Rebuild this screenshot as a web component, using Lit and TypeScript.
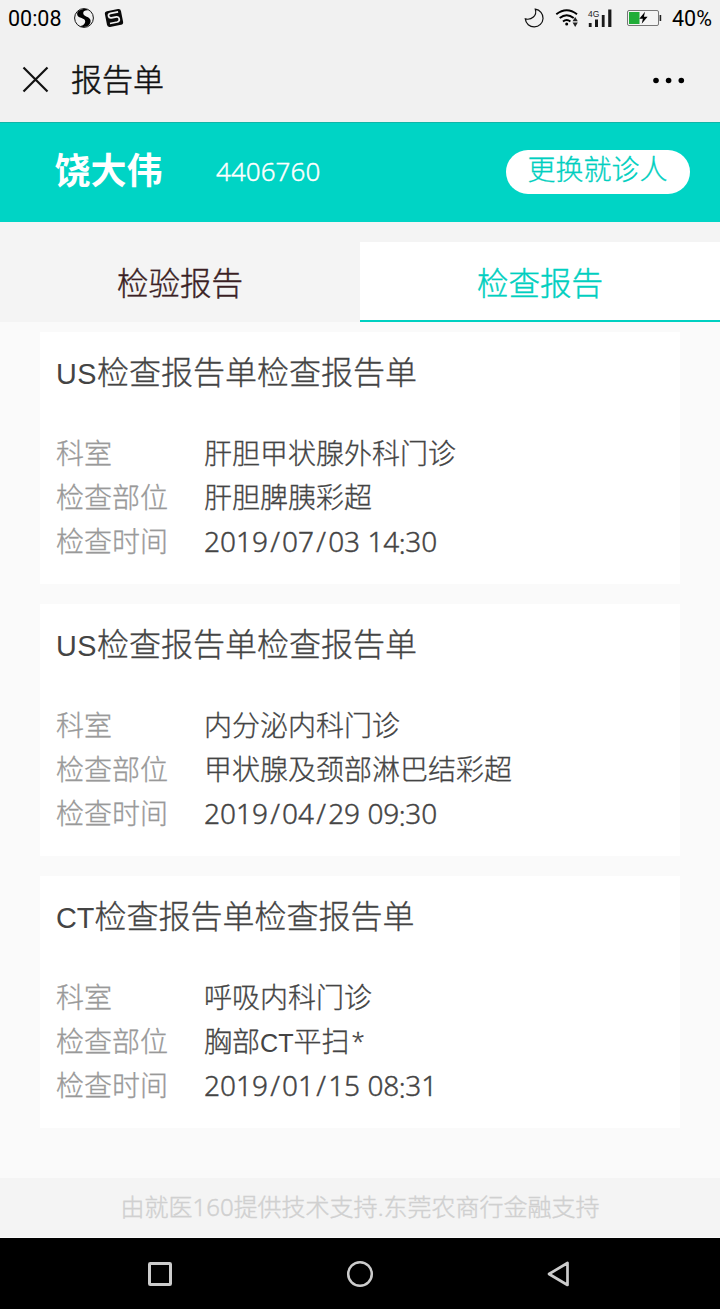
import { LitElement, html, css, svg } from "lit";
import { customElement, property, state } from "lit/decorators.js";
import { classMap } from "lit/directives/class-map.js";

interface Report {
  title: string;
  dept: string;
  part: string;
  time: string;
}

const REPORTS: Report[] = [
  { title: "US检查报告单检查报告单", dept: "肝胆甲状腺外科门诊", part: "肝胆脾胰彩超", time: "2019/07/03 14:30" },
  { title: "US检查报告单检查报告单", dept: "内分泌内科门诊", part: "甲状腺及颈部淋巴结彩超", time: "2019/04/29 09:30" },
  { title: "CT检查报告单检查报告单", dept: "呼吸内科门诊", part: "胸部CT平扫*", time: "2019/01/15 08:31" },
];

/* Wraps latin runs so that they can take their own face and size. */
const mixed = (text: string) =>
  text
    .split(/([A-Z]+|\*)/)
    .filter((p) => p)
    .map((p) =>
      /^[A-Z]+$/.test(p)
        ? html`<span class=${classMap({ latin: true, wide: p === "US" })}>${p}</span>`
        : p === "*"
          ? html`<span class="star">*</span>`
          : p
    );

const dateText = (text: string) =>
  text
    .split(/([/:])/)
    .map((p) => (p === "/" ? html`<span class="slash">/</span>` : p === ":" ? html`<span class="colon">:</span>` : p));

@customElement("report-card")
export class ReportCard extends LitElement {
  @property({ attribute: false }) report!: Report;

  static styles = css`
    :host {
      display: block;
      box-sizing: border-box;
      height: 252px;
      padding: 16px 16px 22px;
      background: #fff;
      color: #444;
      font-family: "Noto Sans CJK SC", sans-serif;
      -webkit-text-stroke: 0.3px currentColor;
    }
    .title {
      height: 44px;
      line-height: 44px;
      font-size: 32px;
      font-weight: 300;
      margin-bottom: 38px;
      white-space: nowrap;
    }
    .row {
      display: grid;
      grid-template-columns: 148px 1fr;
      height: 44px;
      line-height: 44px;
      font-size: 28px;
      font-weight: 300;
      white-space: nowrap;
    }
    .label {
      color: #999;
    }
    .latin {
      font-family: "Liberation Sans", sans-serif;
      font-size: 0.9em;
      line-height: 1;
      -webkit-text-stroke: 0;
    }
    .wide {
      letter-spacing: 0.5px;
    }
    .star {
      font-family: "Noto Sans", sans-serif;
      font-size: 0.85em;
      line-height: 1;
      margin-left: 2px;
      position: relative;
      top: -2px;
    }
    .date {
      font-family: "Noto Sans", sans-serif;
      line-height: 46px;
      -webkit-text-stroke: 0.4px currentColor;
    }
    .slash {
      padding: 0 2.200px;
    }
    .colon {
      margin: 0 -0.5px;
      position: relative;
      top: 2px;
    }
  `;

  render() {
    const r = this.report;
    return html`
      <div class="title">${mixed(r.title)}</div>
      <div class="row"><span class="label">科室</span><span>${mixed(r.dept)}</span></div>
      <div class="row"><span class="label">检查部位</span><span>${mixed(r.part)}</span></div>
      <div class="row"><span class="label">检查时间</span><span class="date">${dateText(r.time)}</span></div>
    `;
  }
}

@customElement("status-bar")
export class StatusBar extends LitElement {
  static styles = css`
    :host {
      display: flex;
      box-sizing: border-box;
      height: 38px;
      padding: 0 8px;
      align-items: center;
      justify-content: space-between;
      font: 21.500px/40px Roboto, sans-serif;
      color: #000;
    }
    .side {
      display: flex;
      align-items: center;
      height: 38px;
    }
    .clock {
      width: 65px;
    }
    .level {
      width: 40px;
      margin-left: 4px;
      white-space: nowrap;
    }
    svg {
      display: block;
    }
  `;

  render() {
    return html`
      <div class="side">
        <span class="clock">00:08</span>
        <svg width="54" height="38" viewBox="73 0 54 38">
          <circle cx="84" cy="18" r="9.4" fill="none" stroke="#111" stroke-width="1" />
          <path
            d="M86.8 9.2C82 8.5 76.5 10.800 77.200 14.800C78 18.800 85.500 17.500 85.200 21.500C85 24.600 82 26 79.500 26.200C85.500 28.500 90.800 25.500 90.600 20.800C90.300 16 83 17 83.200 12.900C83.300 10.800 85 10 88.200 10.200Z"
            fill="#000"
          />
          <g transform="rotate(-11 114 18)">
            <rect x="105.800" y="10" width="16.400" height="16" rx="2.600" fill="#0a0a0a" />
            <path
              d="M119.200 12.800H111.500Q109 12.800 109 15T111.500 17.300H116.600Q119 17.400 119 19.800T116.500 22.600H109"
              fill="none"
              stroke="#f1f1f1"
              stroke-width="1.700"
            />
          </g>
        </svg>
      </div>
      <div class="side">
        <svg width="148" height="38" viewBox="520 0 148 38">
          <path d="M535.300 9.200A8.900 8.900 0 1 1 525.300 18.900C531.500 20.500 537.300 15.500 535.300 9.200Z" fill="none" stroke="#111" stroke-width="1.200" />
          <g fill="none" stroke="#000" stroke-width="2">
            <path d="M556.300 14.300Q566.700 6.300 577 14.300" />
            <path d="M559.700 18Q566.700 12.400 573.700 18" />
            <path d="M563 21.500Q566.700 18.600 570.400 21.500" />
          </g>
          <circle cx="566.700" cy="24" r="1.500" />
          <path d="M575.200 17L577.800 21.200H572.600ZM575.200 27L577.800 22.600H572.600Z" fill="#222" />
          <text x="588" y="16.500" font-family="Liberation Sans" font-size="8.500" fill="#222">4G</text>
          <path d="M588.800 23h2.800v4h-2.800zM595 19.500h3v7.500h-3zM601.800 15h2.800v12h-2.800zM608.200 9.500h3.200v17.500h-3.200z" fill="#1a1a1a" />
          <rect x="627.500" y="10.500" width="31" height="15" rx="1.500" fill="#f4f4f4" stroke="#777" />
          <rect x="629" y="12" width="10.500" height="12" fill="#20ad38" />
          <rect x="659.600" y="15" width="1.600" height="6" fill="#222" />
          <path d="M645 11.800L639.300 18.700H642.900L641.700 23.700L647.600 16.700H643.900Z" fill="#000" />
        </svg>
        <span class="level">40%</span>
      </div>
    `;
  }
}

@customElement("app-root")
export class AppRoot extends LitElement {
  @state() private active = 1;

  static styles = css`
    :host {
      display: flex;
      flex-direction: column;
      width: 720px;
      height: 1309px;
      overflow: hidden;
      background: #fafafa;
      font-family: "Noto Sans CJK SC", sans-serif;
    }
    svg {
      display: block;
    }
    .top {
      height: 122px;
      background: #f1f1f1;
      flex: none;
    }
    .titlebar {
      display: flex;
      align-items: center;
      height: 82px;
      padding: 0 35px 0 22px;
      box-sizing: border-box;
    }
    .heading {
      flex: 1;
      margin-left: 22px;
      font-size: 31px;
      line-height: 79px;
      height: 82px;
      color: #111;
      font-weight: 300;
      -webkit-text-stroke: 0.5px #111;
    }
    .more {
      margin-top: 2px;
    }
    .patient {
      display: flex;
      flex: none;
      height: 100px;
      box-sizing: border-box;
      align-items: center;
      padding: 0 30px 0 54.500px;
      background: #00d4c5;
      border-top: 1px solid #10b5a8;
      color: #fff;
    }
    .name {
      width: 161.500px;
      font-size: 36px;
      font-weight: 700;
      line-height: 60px;
      margin-bottom: 9px;
    }
    .code {
      flex: 1;
      font: 300 26px/60px "Noto Sans", sans-serif;
      letter-spacing: 0.05px;
      -webkit-text-stroke: 0.4px currentColor;
      margin-bottom: 4px;
    }
    .switch {
      width: 184px;
      height: 44px;
      border: 0;
      padding: 0 1px 7px 0;
      margin-bottom: 1px;
      border-radius: 22px;
      background: #fff;
      color: #00cfc0;
      font: 300 28px/37px "Noto Sans CJK SC", sans-serif;
      -webkit-text-stroke: 0.3px currentColor;
      text-align: center;
    }
    .tabs {
      display: grid;
      grid-template-columns: 1fr 1fr;
      flex: none;
      height: 100px;
      box-sizing: border-box;
      padding-top: 20px;
      background: #f4f4f4;
    }
    .tab {
      box-sizing: border-box;
      height: 80px;
      border-bottom: 2px solid transparent;
      text-align: center;
      font-size: 31.500px;
      line-height: 78px;
      font-weight: 300;
      -webkit-text-stroke: 0.4px currentColor;
      color: #3b1f24;
    }
    .tab.active {
      background: #fff;
      border-color: #00d0c1;
      color: #00cfc0;
    }
    .list {
      flex: 1;
      display: flex;
      flex-direction: column;
      gap: 20px;
      padding: 10px 40px 0;
    }
    .footer {
      flex: none;
      box-sizing: border-box;
      height: 60px;
      border-bottom: 1px solid #fafafa;
      background: #f4f4f4;
      color: #d0d0d0;
      font-size: 24px;
      font-weight: 300;
      -webkit-text-stroke: 0.4px currentColor;
      line-height: 56px;
      text-align: center;
      white-space: nowrap;
    }
    .num {
      font-family: "Noto Sans", sans-serif;
      line-height: 1;
    }
    .nav {
      flex: none;
      height: 71px;
      background: #000;
      display: flex;
      align-items: center;
      justify-content: space-between;
      padding: 0 145px;
    }
  `;

  render() {
    return html`
      <div class="top">
        <status-bar></status-bar>
        <div class="titlebar">
          <svg width="27" height="27" viewBox="0 0 27 27">
            <path d="M1.500 1.500L25.500 25.500M25.500 1.500L1.500 25.500" stroke="#111" stroke-width="2.200" />
          </svg>
          <span class="heading">报告单</span>
          <svg class="more" width="32" height="8" viewBox="0 0 32 8">
            ${[3, 15.600, 28.300].map((x) => svg`<circle cx=${x} cy="4.500" r="2.800" />`)}
          </svg>
        </div>
      </div>
      <div class="patient">
        <span class="name">饶大伟</span>
        <span class="code">4406760</span>
        <button class="switch">更换就诊人</button>
      </div>
      <div class="tabs">
        ${["检验报告", "检查报告"].map(
          (t, i) => html`<div class=${classMap({ tab: true, active: i === this.active })} @click=${() => (this.active = i)}>${t}</div>`
        )}
      </div>
      <div class="list">${REPORTS.map((r) => html`<report-card .report=${r}></report-card>`)}</div>
      <div class="footer">由就医<span class="num">160</span>提供技术支持<span class="num">.</span>东莞农商行金融支持</div>
      <div class="nav">
        <svg width="30" height="30" viewBox="0 0 30 30">
          <rect x="4.500" y="4.500" width="21" height="21" rx="0.800" fill="none" stroke="#ccc" stroke-width="3" />
        </svg>
        <svg width="30" height="30" viewBox="0 0 30 30">
          <circle cx="15" cy="15" r="11.800" fill="none" stroke="#ccc" stroke-width="2.500" />
        </svg>
        <svg width="30" height="30" viewBox="0 0 30 30">
          <path d="M22.500 4V26L4 15Z" fill="none" stroke="#ccc" stroke-width="2.700" stroke-linejoin="round" />
        </svg>
      </div>
    `;
  }
}
